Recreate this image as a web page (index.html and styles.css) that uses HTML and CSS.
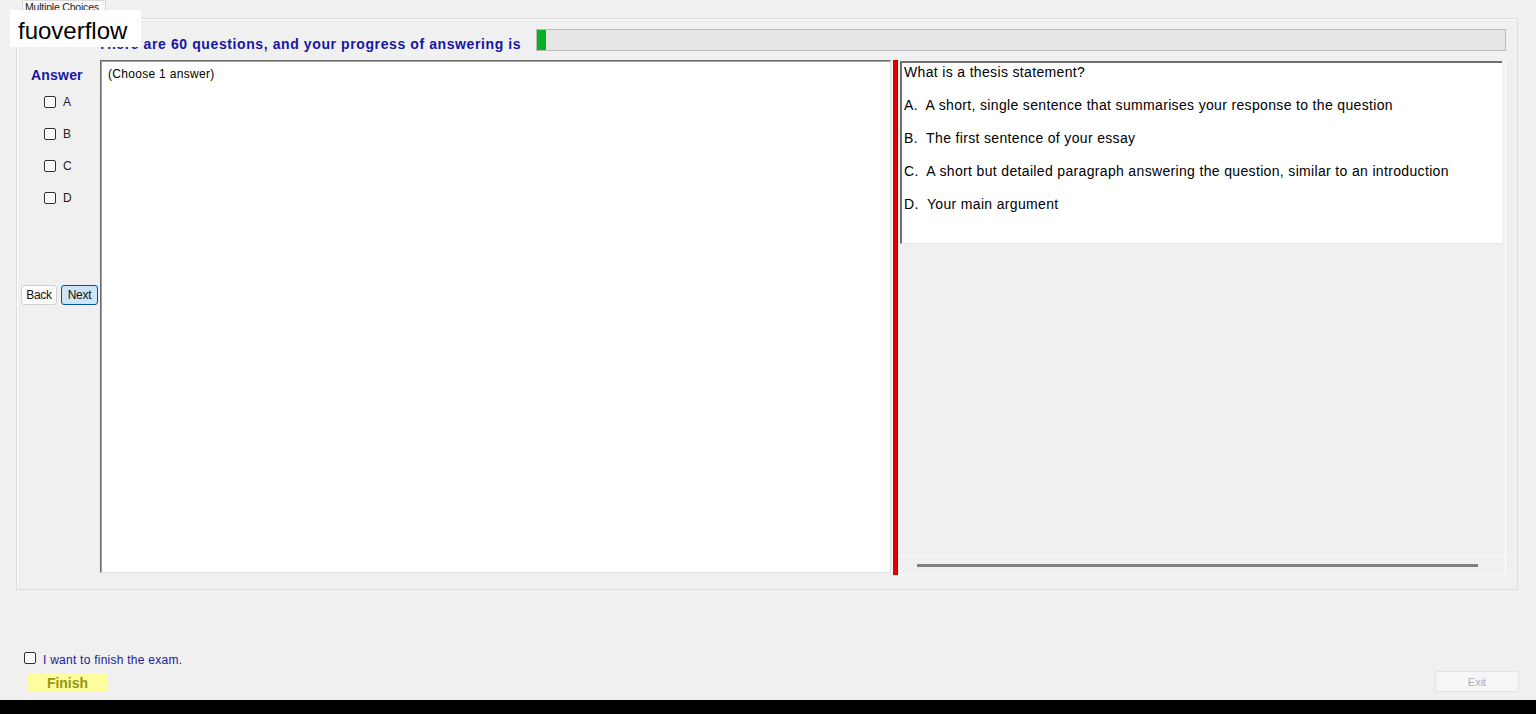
FILE: index.html
```html
<!DOCTYPE html>
<html lang="en">

<head>
    <meta charset="UTF-8">
    <meta name="viewport" content="width=device-width, initial-scale=1.0">
    <title>Multiple Choices</title>
    <link rel="stylesheet" href="styles.css">
</head>

<body>
    <div class="window">
        <div class="tab">Multiple Choices</div>

        <div class="group">
            <div class="header">
                <h1 class="title">There are 60 questions, and your progress of answering is</h1>
                <div class="progress">
                    <div class="progress-fill"></div>
                </div>
            </div>

            <div class="main">
                <div class="answer-col">
                    <div class="answer-title">Answer</div>
                    <div class="choices">
                        <label class="choice"><input type="checkbox" class="box"> A</label>
                        <label class="choice"><input type="checkbox" class="box"> B</label>
                        <label class="choice"><input type="checkbox" class="box"> C</label>
                        <label class="choice"><input type="checkbox" class="box"> D</label>
                    </div>
                    <div class="nav">
                        <button class="btn btn-back">Back</button>
                        <button class="btn btn-active">Next</button>
                    </div>
                </div>

                <div class="notes">(Choose 1 answer)</div>

                <div class="splitter"></div>

                <div class="question-panel">
                    <div class="question">
                        <p class="q-line">What is a thesis statement?</p>
                        <p class="q-line">A.  A short, single sentence that summarises your response to the question</p>
                        <p class="q-line">B.  The first sentence of your essay</p>
                        <p class="q-line">C.  A short but detailed paragraph answering the question, similar to an introduction</p>
                        <p class="q-line">D.  Your main argument</p>
                    </div>
                    <div class="hscroll">
                        <div class="hscroll-thumb"></div>
                    </div>
                </div>
            </div>
        </div>

        <div class="footer">
            <label class="finish-check"><input type="checkbox" class="box"> <span class="finish-text">I want to finish the exam.</span></label>
            <div class="footer-row">
                <button class="finish-btn">Finish</button>
                <button class="exit-btn">Exit</button>
            </div>
        </div>
    </div>
    <div class="taskbar"></div>

    <div class="watermark">fuoverflow</div>
</body>

</html>
```

FILE: styles.css
```css
body {
    margin: 0;
    background-color: #f0f0f0;
    font-family: "Liberation Sans", Arial, sans-serif;
    color: #000;
    height: 714px;
    overflow: hidden;
}

.window {
    height: 700px;
    overflow: hidden;
}

/* tab page header */
.tab {
    margin-left: 22px;
    width: 84px;
    height: 13px;
    padding-left: 2px;
    font-size: 10.5px;
    line-height: 12px;
    letter-spacing: -0.2px;
    color: #222;
    white-space: nowrap;
    background-color: #f9f9f9;
    border: 1px solid #d9d9d9;
    border-bottom: none;
    box-sizing: border-box;
    overflow: hidden;
}

.group {
    margin: 5px 18px 0 16px;
    height: 572px;
    border: 1px solid #dcdcdc;
    box-shadow: inset 1px 1px 0 #fff;
    box-sizing: border-box;
}

.header {
    display: flex;
    align-items: flex-start;
    padding: 10px 11px 0 81px;
    height: 23px;
}

.title {
    margin: 0;
    padding-top: 7px;
    font-size: 14px;
    line-height: 16px;
    font-weight: bold;
    letter-spacing: 0.6px;
    color: #1717a6;
    white-space: nowrap;
}

.progress {
    flex: 1;
    margin-left: 15px;
    height: 22px;
    background-color: #e6e6e6;
    border: 1px solid #bcbcbc;
    box-sizing: border-box;
}

.progress-fill {
    width: 9px;
    height: 100%;
    background-color: #06b025;
}

.main {
    display: flex;
    margin-top: 8px;
    height: 515px;
}

.answer-col {
    width: 83px;
    flex-shrink: 0;
}

.answer-title {
    margin: 7px 0 0 14px;
    font-size: 14px;
    line-height: 16px;
    font-weight: bold;
    letter-spacing: 0.2px;
    color: #1717a6;
}

.choices {
    display: flex;
    flex-direction: column;
    gap: 20px;
    margin: 13px 0 0 27px;
}

.choice {
    display: flex;
    align-items: center;
    gap: 7px;
    height: 12px;
    font-size: 12px;
    color: #222;
}

.box {
    appearance: none;
    width: 12px;
    height: 12px;
    margin: 0;
    border: 1px solid #333;
    border-radius: 2px;
    background-color: #fff;
    box-sizing: border-box;
    flex-shrink: 0;
}

.nav {
    display: flex;
    gap: 4px;
    margin: 81px 0 0 4px;
}

.btn {
    width: 37px;
    height: 20px;
    padding: 0;
    font-family: inherit;
    font-size: 12px;
    letter-spacing: -0.3px;
    color: #111;
    background-color: #fdfdfd;
    border: 1px solid #d0d0d0;
    border-radius: 3px;
}

.btn-back {
    width: 36px;
}

.btn-active {
    background-color: #cce4f7;
    border-color: #005499;
}

.notes {
    width: 791px;
    height: 513px;
    padding: 6px 7px;
    font-size: 12px;
    letter-spacing: 0.3px;
    background-color: #fff;
    border: 1px solid;
    border-color: #6a6a6a #e3e3e3 #e3e3e3 #6a6a6a;
    box-shadow: inset 1px 1px 0 #a0a0a0;
    box-sizing: border-box;
    flex-shrink: 0;
}

.splitter {
    width: 4px;
    margin-left: 2px;
    background-color: #e00000;
    border-right: 1px solid #7a1010;
    flex-shrink: 0;
}

.question-panel {
    width: 608px;
    display: flex;
    flex-direction: column;
    border-right: 1px solid #fff;
    box-sizing: border-box;
}

.question {
    margin: 1px 3px 0 2px;
    height: 183px;
    padding: 1px 0 0 2px;
    background-color: #fff;
    border-left: 2px solid #6f6f6f;
    border-top: 2px solid #6f6f6f;
    border-bottom: 1px solid #e6e6e6;
    box-sizing: border-box;
}

.q-line {
    margin: 0 0 16px;
    font-size: 14px;
    line-height: 17px;
    letter-spacing: 0.34px;
    white-space: pre;
}

.hscroll {
    margin-top: auto;
    height: 17px;
    border-top: 1px solid #fafafa;
    border-bottom: 1px solid #fafafa;
    display: flex;
    align-items: center;
}

.hscroll-thumb {
    flex: 1;
    height: 3px;
    margin: 0 27px 0 19px;
    background-color: #808080;
}

.footer {
    margin-top: 62px;
}

.finish-check {
    display: flex;
    align-items: center;
    gap: 7px;
    margin-left: 24px;
    height: 12px;
    font-size: 12px;
    letter-spacing: 0.25px;
    color: #20209c;
}

.finish-text {
    padding-top: 4px;
}

.footer-row {
    display: flex;
    justify-content: space-between;
    align-items: flex-start;
    margin-top: 7px;
    padding: 0 17px 0 27px;
}

.finish-btn {
    margin-top: 2px;
    width: 81px;
    height: 19px;
    padding: 0;
    font-family: inherit;
    font-size: 14px;
    font-weight: bold;
    color: #96960f;
    background-color: #fdfd9e;
    border: none;
}

.exit-btn {
    width: 84px;
    height: 21px;
    padding: 0;
    font-family: inherit;
    font-size: 11px;
    color: #b0b0b0;
    background-color: #f6f6f6;
    border: 1px solid #e2e2e2;
    border-radius: 2px;
}

.taskbar {
    height: 14px;
    background-color: #000;
}

/* overlay label */
.watermark {
    position: absolute;
    top: 10px;
    left: 10px;
    width: 131px;
    height: 37px;
    padding-left: 8px;
    font-size: 24px;
    line-height: 42px;
    background-color: #fff;
    box-sizing: border-box;
}
```
